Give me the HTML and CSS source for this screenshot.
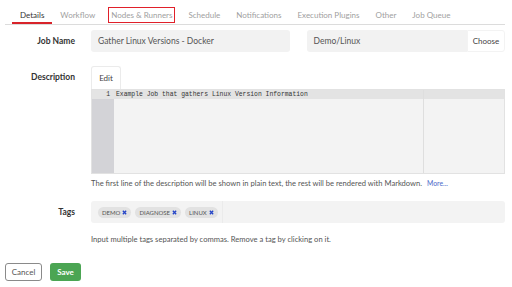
FILE: index.html
```html
<!DOCTYPE html>
<html lang="en">
<head>
    <meta charset="UTF-8">
    <meta name="viewport" content="width=device-width, initial-scale=1.0">
    <title>Edit Job</title>
    <link rel="stylesheet" href="styles.css">
</head>
<body>

    <div class="page">
        <nav class="tabs">
            <a class="tab active">Details</a>
            <a class="tab">Workflow</a>
            <a class="tab"><span class="marked">Nodes &amp; Runners</span></a>
            <a class="tab">Schedule</a>
            <a class="tab">Notifications</a>
            <a class="tab">Execution Plugins</a>
            <a class="tab">Other</a>
            <a class="tab">Job Queue</a>
        </nav>

        <div class="row row-name">
            <label class="label">Job Name</label>
            <div class="pair">
                <div class="input">Gather Linux Versions - Docker</div>
                <div class="input-group">
                    <div class="input">Demo/Linux</div>
                    <button class="btn-choose">Choose</button>
                </div>
            </div>
        </div>

        <div class="row row-desc">
            <label class="label label-top">Description</label>
            <div>
                <div class="edit-tab">Edit</div>
                <div class="editor">
                    <div class="gutter">
                        <div class="gutter-line">1</div>
                    </div>
                    <div class="code">
                        <div class="code-line">Example Job that gathers Linux Version Information</div>
                        <div class="print-margin"></div>
                    </div>
                </div>
                <p class="help">The first line of the description will be shown in plain text, the rest will be rendered with Markdown. <a class="more">More...</a></p>
            </div>
        </div>

        <div class="row row-tags">
            <label class="label label-top label-tags">Tags</label>
            <div>
                <div class="tag-box">
                    <div class="tag-list">
                        <span class="tag">demo <svg class="x" viewBox="0 0 6 6"><path d="M1 1L5 5M5 1L1 5"/></svg></span>
                        <span class="tag">diagnose <svg class="x" viewBox="0 0 6 6"><path d="M1 1L5 5M5 1L1 5"/></svg></span>
                        <span class="tag">linux <svg class="x" viewBox="0 0 6 6"><path d="M1 1L5 5M5 1L1 5"/></svg></span>
                    </div>
                </div>
                <p class="help help-tags">Input multiple tags separated by commas. Remove a tag by clicking on it.</p>
            </div>
        </div>

        <div class="actions">
            <button class="btn btn-cancel">Cancel</button>
            <button class="btn btn-save">Save</button>
        </div>
    </div>

</body>
</html>
```

FILE: styles.css
```css
body {
    margin: 0;
    font-family: 'Lato', 'Noto Sans', sans-serif;
    font-size: 7.5px;
    color: #444;
    background: #ffffff;
}

.page {
    width: 500px;
    padding-left: 5px;
}

/* tabs */
.tabs {
    display: flex;
    padding-left: 7px;
    border-bottom: 1px solid #dcdcdc;
    height: 24px;
}

.tab {
    padding: 10px 8px 3px;
    line-height: 10px;
    font-size: 8px;
    color: #a0a0a0;
    border-bottom: 2px solid transparent;
    white-space: nowrap;
}

.tab.active {
    color: #333;
    border-bottom-color: #d8232a;
}

.marked {
    outline: 1px solid #e0202a;
    outline-offset: 2px;
}

/* form rows */
.row {
    display: grid;
    grid-template-columns: 70px 1fr;
    column-gap: 16px;
}

.label {
    text-align: right;
    font-size: 8.5px;
    font-weight: 700;
    color: #333;
    align-self: center;
}

.label-top {
    align-self: start;
    line-height: 23px;
}

.label-tags {
    line-height: 22px;
}

.row-name {
    margin-top: 5px;
}

.pair {
    display: grid;
    grid-template-columns: 1fr 1fr;
    column-gap: 17px;
}

.input {
    height: 22px;
    line-height: 22px;
    padding: 0 7px;
    background: #f2f2f2;
    border-radius: 3px;
    color: #555;
    font-size: 8.5px;
}

.input-group {
    display: flex;
}

.input-group .input {
    flex: 1;
    border-radius: 3px 0 0 3px;
}

.btn-choose {
    width: 38px;
    height: 22px;
    border: 1px solid #f3f3f3;
    border-radius: 0 3px 3px 0;
    background: #fff;
    font-family: inherit;
    font-size: 8px;
    color: #444;
    padding: 0;
}

/* description */
.row-desc {
    margin-top: 14px;
}

.edit-tab {
    width: 28px;
    height: 22px;
    line-height: 22px;
    text-align: center;
    border: 1px solid #ebebeb;
    border-bottom: none;
    border-radius: 3px 3px 0 0;
    color: #444;
    font-size: 8px;
}

.editor {
    display: flex;
    height: 85px;
    background: #f3f3f3;
    border: 1px solid #e2e2e2;
    box-sizing: border-box;
}

.gutter {
    width: 22px;
    background: #d3d3d7;
}

.gutter-line {
    height: 9px;
    line-height: 9px;
    text-align: right;
    padding-right: 4px;
    background: #e4e4e4;
    font-family: 'Liberation Mono', monospace;
    font-size: 6.4px;
    color: #333;
}

.code {
    position: relative;
    flex: 1;
}

.code-line {
    height: 9px;
    line-height: 9px;
    padding-left: 2px;
    background: #e3e3e3;
    font-family: 'Liberation Mono', monospace;
    font-size: 6.4px;
    color: #333;
}

.print-margin {
    position: absolute;
    top: 0;
    bottom: 0;
    left: 309px;
    width: 1px;
    background: #dedede;
}

.help {
    margin: 4px 0 0;
    line-height: 10px;
    font-size: 7.6px;
    color: #555;
}

.more {
    color: #4a68c9;
    font-size: 6.8px;
    margin-left: 3px;
}

/* tags */
.row-tags {
    margin-top: 13px;
}

.tag-box {
    display: flex;
    height: 22px;
    background: #f3f3f3;
    border-radius: 3px;
}

.tag-list {
    display: flex;
    align-items: center;
    gap: 4px;
    padding: 0 4px 0 7px;
    border-right: 1px solid #ebebeb;
}

.tag {
    display: inline-flex;
    align-items: center;
    gap: 2px;
    height: 11px;
    padding: 0 4px;
    border-radius: 6px;
    background: #e2e2e2;
    font-size: 6px;
    text-transform: uppercase;
    color: #555;
}

.x {
    width: 5px;
    height: 5px;
    stroke: #2545c8;
    stroke-width: 1.6;
}

.help-tags {
    margin-top: 11px;
}

/* buttons */
.actions {
    display: flex;
    gap: 8px;
    margin-top: 19px;
}

.btn {
    height: 18px;
    border-radius: 3px;
    font-family: inherit;
    font-size: 8px;
    padding: 0;
}

.btn-cancel {
    width: 37px;
    border: 1px solid #8a8a8a;
    background: #fff;
    color: #555;
}

.btn-save {
    width: 31px;
    border: none;
    background: #4ba553;
    color: #fff;
    font-weight: 700;
}
```
